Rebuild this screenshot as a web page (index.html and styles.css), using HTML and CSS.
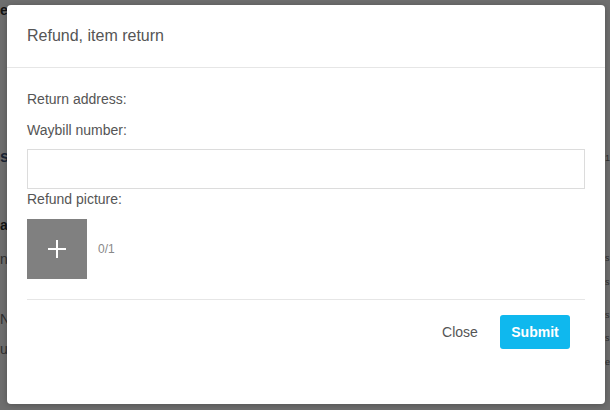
FILE: index.html
```html
<!DOCTYPE html>
<html>
<head>
<meta charset="utf-8">
<link rel="stylesheet" href="styles.css">
</head>
<body>
<div class="page">
  <div class="edge edge-left">
    <div class="frag bold f1">e</div>
    <div class="frag bold navy f2">s</div>
    <div class="frag bold f3">a</div>
    <div class="frag f4">n</div>
    <div class="frag f5">N</div>
    <div class="frag f6">u</div>
  </div>
  <div class="edge edge-right">
    <div class="frag r1">1</div>
    <div class="frag r2">s</div>
    <div class="frag r3">s</div>
    <div class="frag r4">s</div>
    <div class="frag r5">s</div>
    <div class="frag r6">e</div>
  </div>
</div>
<div class="modal">
  <div class="modal-header">Refund, item return</div>
  <div class="modal-body">
    <div class="label">Return address:</div>
    <div class="label label-gap">Waybill number:</div>
    <input class="field" type="text">
    <div class="label">Refund picture:</div>
    <div class="upload-row">
      <div class="upload-box">
        <svg width="18" height="18" viewBox="0 0 18 18"><path d="M9 0V18M0 9H18" stroke="#fff" stroke-width="2" fill="none"/></svg>
      </div>
      <span class="count">0/1</span>
    </div>
    <div class="divider"></div>
    <div class="footer">
      <button class="btn btn-close">Close</button>
      <button class="btn btn-submit">Submit</button>
    </div>
  </div>
</div>
</body>
</html>
```
FILE: styles.css
```css
html, body {
  margin: 0;
  padding: 0;
  width: 610px;
  height: 410px;
  overflow: hidden;
  background: #6e6e6e;
  font-family: "Liberation Sans", Arial, sans-serif;
}
.page {
  display: flex;
  justify-content: space-between;
  height: 410px;
}
.edge {
  width: 8px;
  display: flex;
  flex-direction: column;
  font-size: 14px;
  line-height: 16px;
  color: #2f2f2f;
}
.edge-left { align-items: flex-start; }
.edge-right { width: 5px; align-items: flex-start; font-size: 9px; }
.frag { white-space: nowrap; }
.bold { font-weight: bold; color: #141414; }
.navy { color: #1b2535; font-size: 16px; }
.f1 { margin-top: 2px; }
.f2 { margin-top: 131px; }
.f3 { margin-top: 52px; }
.f4 { margin-top: 18px; }
.f5 { margin-top: 44px; }
.f6 { margin-top: 14px; }
.r1 { margin-top: 150px; }
.r2 { margin-top: 84px; }
.r3 { margin-top: 8px; }
.r4 { margin-top: 17px; }
.r5 { margin-top: 7px; }
.r6 { margin-top: 8px; }

.modal {
  position: absolute;
  left: 7px;
  top: 5px;
  width: 598px;
  height: 399px;
  background: #fff;
  border-radius: 4px;
  box-shadow: 0 1px 6px rgba(0,0,0,0.25);
  box-sizing: border-box;
}
.modal-header {
  padding: 20px 20px;
  font-size: 16px;
  line-height: 22px;
  color: #555;
  border-bottom: 1px solid #e6e6e6;
}
.modal-body {
  padding: 21px 20px 0 20px;
  display: flex;
  flex-direction: column;
}
.label {
  font-size: 14px;
  line-height: 20px;
  color: #555;
}
.label-gap { margin-top: 11px; }
.field {
  margin: 9px 0 0 0;
  height: 40px;
  box-sizing: border-box;
  border: 1px solid #dcdcdc;
  border-radius: 0;
  padding: 0 10px;
  outline: none;
  width: 100%;
}
.upload-row {
  display: flex;
  align-items: center;
  margin-top: 10px;
}
.upload-box {
  width: 60px;
  height: 60px;
  background: #808080;
  display: flex;
  align-items: center;
  justify-content: center;
}
.count {
  margin-left: 11px;
  font-size: 12px;
  color: #888;
}
.divider {
  margin-top: 20px;
  height: 1px;
  background: #e6e6e6;
}
.footer {
  display: flex;
  justify-content: flex-end;
  gap: 5px;
  margin-top: 15px;
  padding-right: 15px;
}
.btn {
  width: 70px;
  height: 34px;
  border: none;
  border-radius: 3px;
  font-family: "Liberation Sans", Arial, sans-serif;
  font-size: 14px;
  padding: 0;
  cursor: pointer;
}
.btn-close {
  background: transparent;
  color: #555;
}
.btn-submit {
  background: #0fb8ee;
  color: #fff;
  font-weight: bold;
}
```
